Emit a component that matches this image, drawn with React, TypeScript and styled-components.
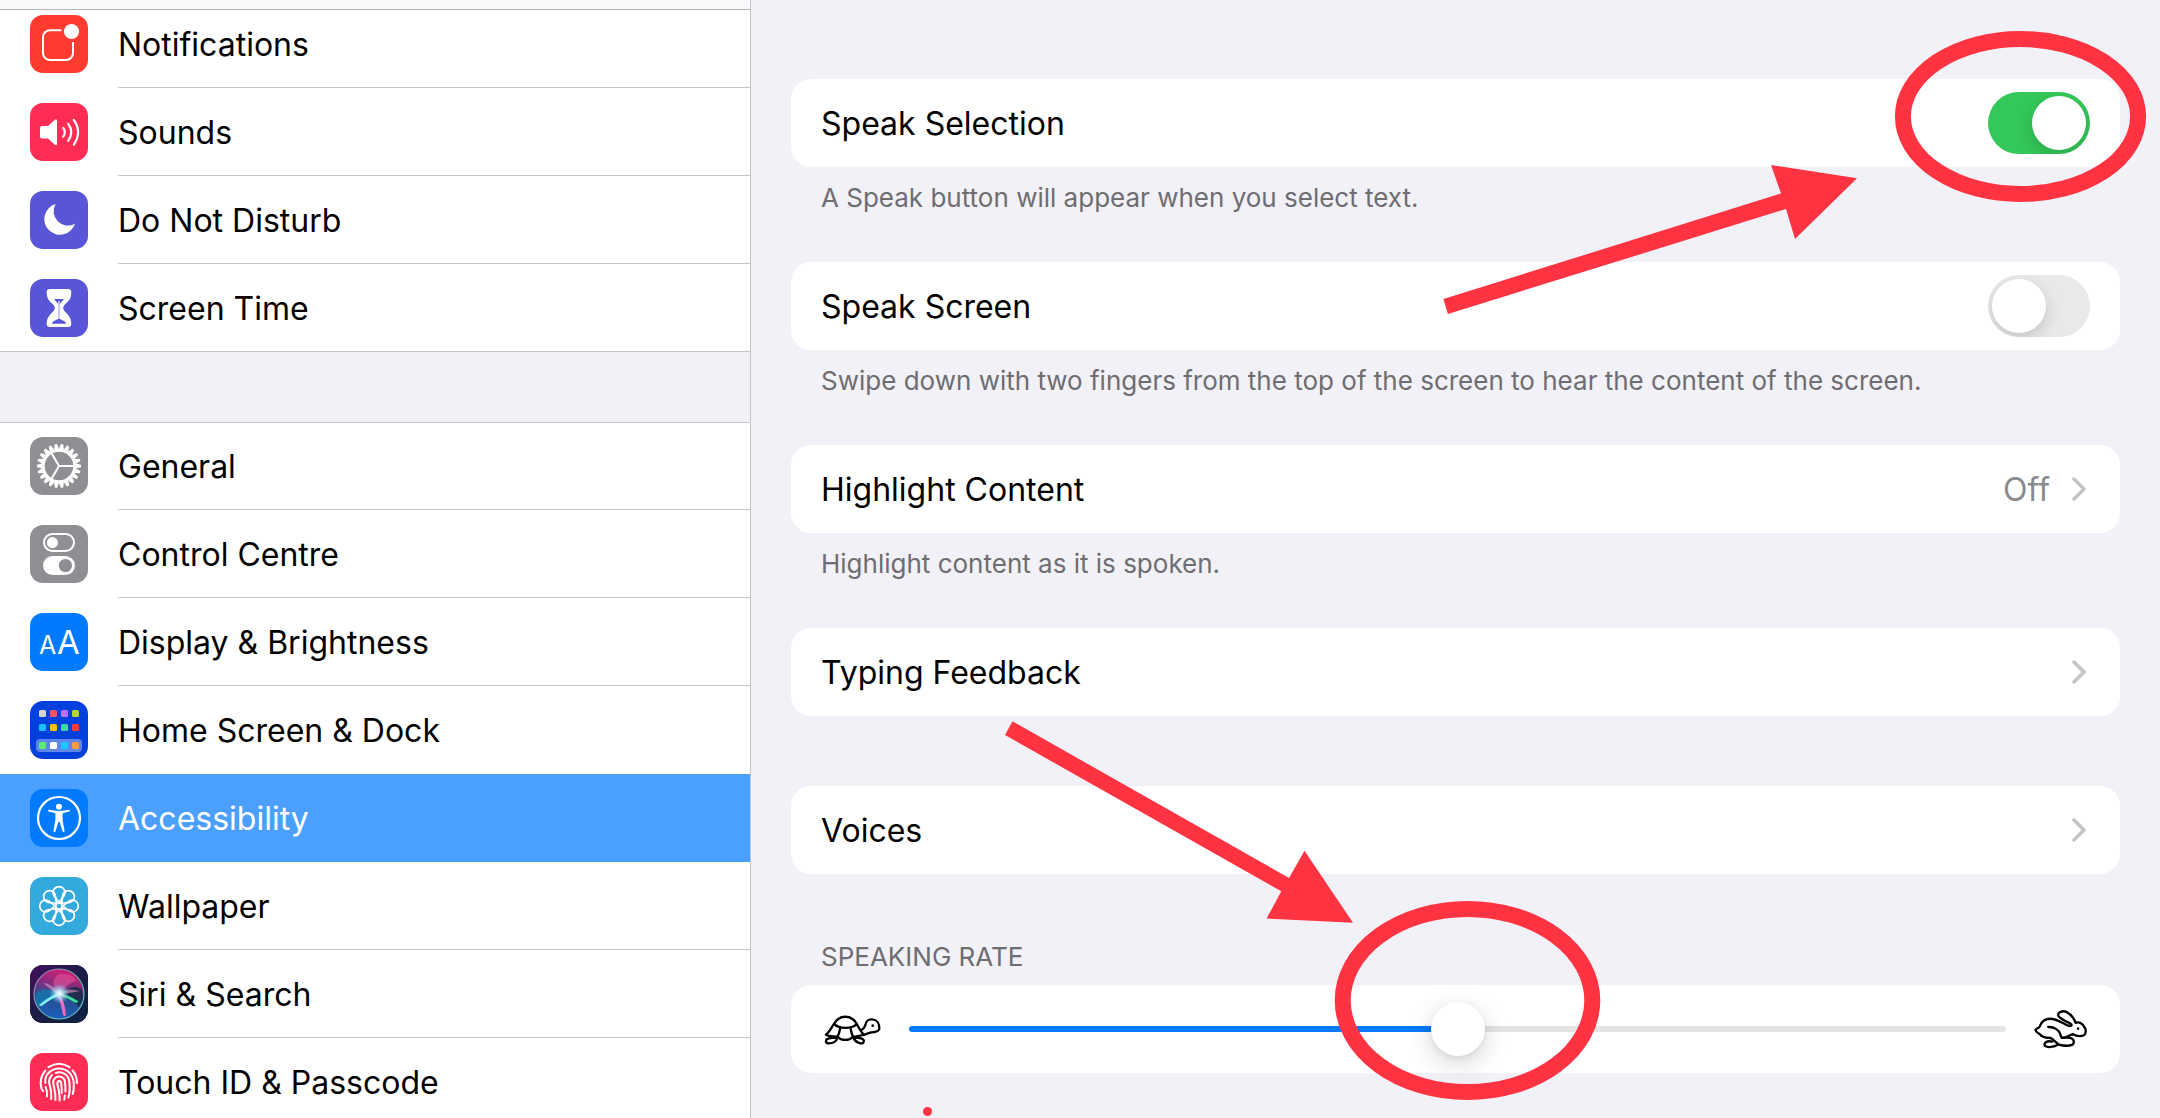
import React, { useState } from "react";
import styled, { createGlobalStyle } from "styled-components";

const GlobalStyle = createGlobalStyle`
  *, *::before, *::after { box-sizing: border-box; }
  body {
    margin: 0;
    background: #f2f1f7;
    color: #000;
    font-family: Inter, "Liberation Sans", sans-serif;
    font-size: 32px;
    line-height: 40px;
  }
  button, input { font: inherit; color: inherit; margin: 0; }
`;

const Screen = styled.div`
  display: grid;
  grid-template-columns: 751px minmax(0, 1fr);
  height: 100vh;
  overflow: hidden;
`;

/* ---------- Sidebar ---------- */

const Sidebar = styled.nav`
  display: flex;
  flex-direction: column;
  overflow: hidden;
  border-right: 1px solid #c6c6c8;
`;

const TopBar = styled.div`
  position: relative;
  z-index: 1;
  flex: none;
  height: 10px;
  margin-bottom: -10px;
  background: #f9f9fb;
  border-bottom: 1px solid #b4b4b8;
`;

const Group = styled.ul`
  flex: none;
  margin: 0 0 70px;
  padding: 0;
  list-style: none;
  background: #fff;
  box-shadow: 0 -1px 0 #c6c6c8 inset;

  & + & {
    box-shadow: 0 1px 0 #c6c6c8 inset;
  }
`;

const NavButton = styled.button<{ $selected: boolean }>`
  display: flex;
  align-items: center;
  gap: 30px;
  width: 100%;
  height: 88px;
  padding: 0 0 0 30px;
  border: 0;
  background: ${(p) => (p.$selected ? "#4ba0ff" : "transparent")};
  color: ${(p) => (p.$selected ? "#fff" : "#000")};
  text-align: left;
`;

const NavLabel = styled.span<{ $line: boolean }>`
  display: flex;
  align-items: center;
  flex: 1;
  height: 88px;
  padding-top: 2px;
  border-bottom: 1px solid ${(p) => (p.$line ? "#c6c6c8" : "transparent")};
`;

const Tile = styled.svg<{ $bg: string }>`
  flex: none;
  width: 58px;
  height: 58px;
  border-radius: 13px;
  background: ${(p) => p.$bg};
`;

/* ---------- Detail pane ---------- */

const Pane = styled.main`
  position: relative;
  display: flex;
  flex-direction: column;
  padding: 79px 40px 0;
  overflow: hidden;
`;

const Section = styled.section<{ $gap?: number }>`
  flex: none;
  margin-bottom: ${(p) => p.$gap ?? 0}px;
`;

const cardBox = `
  display: flex;
  align-items: center;
  width: 100%;
  height: 88px;
  padding: 0 30px;
  border: 0;
  border-radius: 20px;
  background: #fff;
  text-align: left;
`;

const CardLabel = styled.label`${cardBox}`;
const CardButton = styled.button`${cardBox}`;
const SliderCard = styled.div`
  ${cardBox}
  padding: 0 33px;
`;

const Title = styled.span`
  flex: 1;
  padding-top: 2px;
`;

const Value = styled.span`
  margin-right: 22px;
  padding-top: 2px;
  color: #8a8a8e;
`;

const Footnote = styled.p`
  margin: 0;
  padding: 15px 30px 48px;
  font-size: 26px;
  line-height: 32px;
  color: #6d6d72;
`;

const Heading = styled.h2`
  margin: 0;
  padding: 67px 30px 12px;
  font-size: 26px;
  font-weight: 400;
  line-height: 32px;
  color: #6d6d72;
`;

const Toggle = styled.input`
  appearance: none;
  flex: none;
  display: flex;
  width: 102px;
  height: 62px;
  padding: 4px;
  border-radius: 31px;
  background: #e9e9eb;
  overflow: hidden;

  &::before {
    content: "";
    width: 54px;
    height: 54px;
    border-radius: 50%;
    background: #fff;
    box-shadow: 0 6px 16px rgba(0, 0, 0, 0.16);
  }
  &:checked {
    justify-content: flex-end;
    background: #34c759;
  }
`;

const RateSlider = styled.input`
  appearance: none;
  flex: 1;
  min-width: 0;
  height: 54px;
  margin: 0 28px;
  background: transparent;

  &::-webkit-slider-runnable-track {
    height: 6px;
    border-radius: 3px;
    background: linear-gradient(to right, #007aff var(--fill), #e4e4e6 var(--fill));
  }
  &::-webkit-slider-thumb {
    appearance: none;
    width: 54px;
    height: 54px;
    margin-top: -24px;
    border-radius: 50%;
    background: #fff;
    box-shadow: 0 8px 26px rgba(0, 0, 0, 0.16), 0 2px 6px rgba(0, 0, 0, 0.08);
  }
`;

const Drawing = styled.svg`
  flex: none;
  display: block;
`;

const Marker = styled.svg`
  position: absolute;
  overflow: visible;
  pointer-events: none;
`;

/* ---------- Icons ---------- */

const White = (p: React.SVGProps<SVGGElement>) => (
  <g fill="none" stroke="#fff" strokeWidth={2.2} strokeLinecap="round" strokeLinejoin="round" {...p} />
);

const NotificationsIcon = () => (
  <>
    <White strokeWidth={2} strokeLinecap="butt">
      <path d="M31.5 15.2H20a7 7 0 0 0-7 7V38a7 7 0 0 0 7 7h16a7 7 0 0 0 7-7V27" />
    </White>
    <circle cx="41.5" cy="16.5" r="7.6" fill="#fff" />
  </>
);

const SoundsIcon = () => (
  <>
    <path
      fill="#fff"
      d="M12 23h6l6.500-6q2.500-1.800 2.500 1v22.400q0 2.800-2.500 1l-6.500-6h-6q-2 0-2-2v-8.400q0-2 2-2z"
    />
    <White>
      <path d="M33.200 25q3.200 4.200 0 8.600" />
      <path d="M38.200 20.800q6.200 8.200 0 17" />
      <path d="M43.800 17q8.600 12 0 24.600" />
    </White>
  </>
);

const MoonIcon = () => (
  <path fill="#fff" d="M25.600 13A15.700 15.700 0 1 0 45 32.700A14.300 14.300 0 0 1 25.600 13Z" />
);

const HourglassIcon = () => (
  <>
    <path
      fill="#fff"
      d="M20 10h18q3.300 0 3.300 3c0 8-3.500 9.500-7.300 13.500q-1.800 2.500 0 5C37.800 35.500 41.300 38 41.300 45q0 3-3.300 3H20q-3.300 0-3.300-3c0-7 3.500-9.500 7.300-13.500q1.800-2.500 0-5C20.200 22.500 16.700 21 16.700 13q0-3 3.300-3z"
    />
    <path
      fill="#5856d6"
      d="M24 20h10l-4.200 5v14.600q.3.900 2 1.400q4 1.200 4.200 3.800H22q.2-2.600 4.200-3.800q1.700-.5 2-1.400V25z"
    />
    <path stroke="#fff" strokeWidth="1.200" d="M29 22v18" />
  </>
);

const GearIcon = () => (
  <White strokeLinecap="butt">
    <circle cx="29" cy="29" r="15.800" strokeWidth="3" />
    {Array.from({ length: 22 }, (_, i) => (
      <path
        key={i}
        transform={`rotate(${(i * 360) / 22} 29 29)`}
        fill="#fff"
        stroke="none"
        d="M46 26.600L51 27.800V30.200L46 31.400Z"
      />
    ))}
    {[0, 120, 240].map((a) => (
      <path key={a} transform={`rotate(${a} 29 29)`} d="M29 29H45" strokeWidth="2" />
    ))}
  </White>
);

const ControlIcon = () => (
  <>
    <rect x="14" y="9" width="30" height="17" rx="8.500" fill="none" stroke="#fff" strokeWidth="2" />
    <circle cx="22.400" cy="17.600" r="5.600" fill="#fff" />
    <rect x="13" y="31" width="32" height="19" rx="9.500" fill="#fff" />
    <circle cx="35.400" cy="40.500" r="6.600" fill="#8e8e93" />
  </>
);

const DisplayIcon = () => (
  <g fill="#fff" fontFamily="Inter, sans-serif">
    <text x="9" y="41" fontSize="25">A</text>
    <text x="27" y="41" fontSize="33">A</text>
  </g>
);

const homeRows: [number, string[]][] = [
  [9, ["#d8d4cf", "#ff5060", "#b870ff", "#b5d334"]],
  [23, ["#18c0ff", "#ffc400", "#3cd9a4", "#ff3a30"]],
  [41, ["#57ef70", "#ffffff", "#18c8ff", "#ff9a40"]],
];

const HomeIcon = () => (
  <>
    <rect x="6" y="38" width="46" height="13" rx="4" fill="#5f86ea" />
    {homeRows.map(([y, colors]) =>
      colors.map((c, i) => <rect key={c + y} x={9 + i * 11} y={y} width="7" height="7" rx="1.500" fill={c} />)
    )}
  </>
);

const AccessibilityIcon = () => (
  <>
    <circle cx="29" cy="29" r="21" fill="none" stroke="#fff" strokeWidth="2.200" />
    <circle cx="29" cy="17.800" r="3" fill="#fff" />
    <path
      fill="#fff"
      d="M18.800 20.800Q29 23 39.200 20.800Q41 21.400 39.400 22.600L32.600 24.200V31L34.600 42Q34 43.800 32.600 42.400L29.600 33H28.400L25.400 42.400Q24 43.800 23.400 42L25.400 31V24.200L18.600 22.600Q17 21.400 18.800 20.800Z"
    />
  </>
);

const WallpaperIcon = () => (
  <White strokeWidth={1.700}>
    {Array.from({ length: 8 }, (_, i) => (
      <path
        key={i}
        transform={`rotate(${i * 45} 29 29)`}
        d="M29 25.800C27.500 22 23 19.500 23 15.700A6 6 0 0 1 35 15.700C35 19.500 30.500 22 29 25.800"
      />
    ))}
    <circle cx="29" cy="29" r="3.200" />
  </White>
);

const SiriIcon = () => (
  <>
    <defs>
      <linearGradient id="siriBg" x1="0" y1="0" x2="1" y2="1">
        <stop offset="0" stopColor="#43105c" />
        <stop offset="0.500" stopColor="#1b1c48" />
        <stop offset="1" stopColor="#0c2340" />
      </linearGradient>
      <linearGradient id="siriOrb" x1="0.600" y1="0" x2="0.400" y2="1">
        <stop offset="0" stopColor="#d31f74" />
        <stop offset="0.350" stopColor="#7c2f80" />
        <stop offset="0.600" stopColor="#24508f" />
        <stop offset="1" stopColor="#1c5fc0" />
      </linearGradient>
      <radialGradient id="siriGlow">
        <stop offset="0" stopColor="#fff" />
        <stop offset="0.350" stopColor="#bff4ff" stopOpacity="0.800" />
        <stop offset="1" stopColor="#7fd8ff" stopOpacity="0" />
      </radialGradient>
      <linearGradient id="siriRing" x1="0" y1="0" x2="1" y2="1">
        <stop offset="0" stopColor="#b070c0" />
        <stop offset="0.600" stopColor="#5cc0a0" />
        <stop offset="1" stopColor="#6ab0e0" />
      </linearGradient>
    </defs>
    <rect width="58" height="58" fill="url(#siriBg)" />
    <circle cx="29" cy="29" r="25" fill="url(#siriOrb)" stroke="url(#siriRing)" strokeWidth="1.200" />
    <path fill="#10283c" opacity="0.750" d="M32 27Q46 18 52 25Q55 34 49 42Q42 34 32 30Z" />
    <path fill="#0e7fb0" opacity="0.700" d="M28 28Q14 20 6 29Q5 36 8 41Q18 33 28 30Z" />
    <path fill="#f05aa0" opacity="0.500" d="M28 29Q18 18 29 9Q44 8 46 16Q38 18 30 28Z" />
    <path fill="#f4b0e0" opacity="0.500" d="M28 28Q22 18 13 18Q20 24 27 29ZM30 28Q36 22 50 26Q42 28 31 29Z" />
    <path fill="#7ff0f4" d="M30 27Q18 32 9 40Q10 42 13 40Q22 33 31 30Z" />
    <path fill="#3ce0a0" d="M30 28Q40 31 48 36Q48 39 44 37Q36 32 29 30Z" />
    <path fill="#f06ac0" d="M29 29Q35 36 36 50Q35 52 33 50Q31 38 27 30Z" />
    <circle cx="29.500" cy="28.500" r="10" fill="url(#siriGlow)" />
  </>
);

const TouchIcon = () => (
  <White strokeWidth={2}>
    <path d="M18.500 14.200Q29 7.500 39.500 14.200" />
    <path d="M42.500 17.500Q47 22.500 47 30" />
    <path d="M15.400 17.500Q9 25 11.200 34.500Q11.700 36.500 13 38" />
    <path d="M15.400 30C14 22 21 15.400 29 15.400S43.500 21.500 43.800 31Q44 37 42.800 41" />
    <path d="M15.600 34Q17.400 38 17 43.500" />
    <path d="M22 22Q18.600 25.500 19.200 30.500Q21.600 37 21.200 46" />
    <path d="M25.800 20C32 17.600 38.600 21.500 39.400 29Q40.400 38 38.400 44.500" />
    <path d="M25.400 47C26 38 23.200 33 23.200 29.500A5.900 5.900 0 0 1 35 29.500Q35.600 34.500 35.400 38.500" />
    <path d="M29.600 47.500C30 40 27.600 33.500 27.400 30.500Q27.400 28 29.200 28T31.200 30.500Q32 37 31.600 40" />
    <path d="M34.800 42.500L34.300 46.500" />
  </White>
);

const Turtle = () => (
  <Drawing viewBox="130 341 172 93" width="57" height="31" aria-hidden="true">
    <g fill="none" stroke="#000" strokeWidth="7" strokeLinejoin="round" strokeLinecap="round">
      <path d="M136 403C148 394 154 378 162 368C170 355 180 349 194 349C210 349 220 356 227 368C234 380 242 396 250 403C240 407 228 408 216 410C206 422 182 422 172 410C160 407 146 409 136 403Z" />
      <path d="M162 372C176 386 212 386 228 372M179 383C177 395 174 404 170 410M210 383C212 395 214 403 218 410" />
      <path d="M244 388C252 384 254 378 256 370C258 360 268 356 276 357C290 358 298 370 297 386C294 396 280 396 272 396C264 398 258 402 250 404" />
      <path d="M136 423C135 414 150 412 170 412C168 424 156 430 142 429C138 429 136 427 136 423ZM218 412C236 412 252 414 250 424C250 430 244 430 238 429C228 426 222 420 218 412Z" />
    </g>
    <circle cx="277" cy="376" r="4" />
  </Drawing>
);

const Rabbit = () => (
  <Drawing viewBox="223 209 160 120" width="53" height="40" aria-hidden="true">
    <g fill="none" stroke="#000" strokeWidth="7" strokeLinejoin="round" strokeLinecap="round">
      <path d="M228 272C230 266 238 267 240 262C246 244 258 238 272 238C296 238 312 256 330 260Q338 260 336 255C322 246 304 240 297 230C292 218 310 212 322 218C334 224 344 238 349 250" />
      <path d="M349 250C362 246 372 256 374 262C382 270 380 284 374 288C364 292 352 292 340 284C332 288 324 294 308 296" />
      <path d="M228 272C228 280 236 280 240 284C246 292 262 296 272 296C282 300 288 310 298 316C312 320 330 320 340 316C346 308 344 298 332 296C322 294 316 296 308 296" />
      <path d="M266 263C284 262 298 272 302 284C304 292 306 296 308 296" />
      <path d="M278 307C260 303 252 312 256 320C264 326 284 324 296 316" />
    </g>
    <circle cx="356" cy="268" r="4" />
  </Drawing>
);

const Chevron = () => (
  <Drawing viewBox="0 0 18 28" width="18" height="28" aria-hidden="true">
    <path d="M2 4L12 14L2 24" fill="none" stroke="#c4c4c7" strokeWidth="3.500" strokeLinecap="round" strokeLinejoin="round" />
  </Drawing>
);

/* ---------- Data ---------- */

type Item = { name: string; bg: string; icon: () => React.JSX.Element };

const groups: Item[][] = [
  [
    { name: "Notifications", bg: "#ff3b30", icon: NotificationsIcon },
    { name: "Sounds", bg: "#ff2d55", icon: SoundsIcon },
    { name: "Do Not Disturb", bg: "#5856d6", icon: MoonIcon },
    { name: "Screen Time", bg: "#5856d6", icon: HourglassIcon },
  ],
  [
    { name: "General", bg: "#8e8e93", icon: GearIcon },
    { name: "Control Centre", bg: "#8e8e93", icon: ControlIcon },
    { name: "Display & Brightness", bg: "#007aff", icon: DisplayIcon },
    { name: "Home Screen & Dock", bg: "#0040dd", icon: HomeIcon },
    { name: "Accessibility", bg: "#007aff", icon: AccessibilityIcon },
    { name: "Wallpaper", bg: "#34aadc", icon: WallpaperIcon },
    { name: "Siri & Search", bg: "#1b1c48", icon: SiriIcon },
    { name: "Touch ID & Passcode", bg: "#ff2d55", icon: TouchIcon },
  ],
];

const RED = "#ff3341";

const Annotations = () => (
  <>
    <Marker style={{ top: 31, right: 14 }} width="251" height="171" aria-hidden="true">
      <ellipse cx="125.500" cy="85.500" rx="117.600" ry="77.500" fill="none" stroke={RED} strokeWidth="16" />
    </Marker>
    <Marker style={{ top: 160, right: 302 }} width="415" height="156" aria-hidden="true">
      <path fill={RED} d="M0.400 139L338 33.500L328 5L414 18.300L352 79L343 49L4.900 154Z" />
    </Marker>
    <Marker style={{ top: 720, left: 254 }} width="350" height="204" aria-hidden="true">
      <path fill={RED} d="M7.500 1.300L284 158L299.500 130.800L348 202.800L261.500 198.600L276.300 171.300L0 15Z" />
    </Marker>
    <Marker style={{ top: 901, left: 584 }} width="265" height="199" aria-hidden="true">
      <ellipse cx="132.500" cy="99.500" rx="124.800" ry="91.600" fill="none" stroke={RED} strokeWidth="16" />
    </Marker>
    <Marker style={{ top: 1107, left: 172 }} width="9" height="9" aria-hidden="true">
      <circle cx="4.500" cy="4.500" r="4.500" fill={RED} />
    </Marker>
  </>
);

export default function App() {
  const [selected, setSelected] = useState("Accessibility");
  const [speakSelection, setSpeakSelection] = useState(true);
  const [speakScreen, setSpeakScreen] = useState(false);
  const [rate, setRate] = useState(50);

  return (
    <Screen>
      <GlobalStyle />
      <Sidebar aria-label="Settings">
        <TopBar />
        {groups.map((items, g) => (
          <Group key={g}>
            {items.map(({ name, bg, icon: Icon }, i) => {
              const last = i === items.length - 1;
              const beside = name === selected || items[i + 1]?.name === selected;
              return (
                <li key={name}>
                  <NavButton $selected={name === selected} onClick={() => setSelected(name)}>
                    <Tile $bg={bg} viewBox="0 0 58 58" aria-hidden="true">
                      <Icon />
                    </Tile>
                    <NavLabel $line={!last && !beside}>{name}</NavLabel>
                  </NavButton>
                </li>
              );
            })}
          </Group>
        ))}
      </Sidebar>

      <Pane>
        <Section>
          <CardLabel>
            <Title>Speak Selection</Title>
            <Toggle type="checkbox" role="switch" checked={speakSelection} onChange={(e) => setSpeakSelection(e.target.checked)} />
          </CardLabel>
          <Footnote>A Speak button will appear when you select text.</Footnote>
        </Section>
        <Section>
          <CardLabel>
            <Title>Speak Screen</Title>
            <Toggle type="checkbox" role="switch" checked={speakScreen} onChange={(e) => setSpeakScreen(e.target.checked)} />
          </CardLabel>
          <Footnote>Swipe down with two fingers from the top of the screen to hear the content of the screen.</Footnote>
        </Section>
        <Section>
          <CardButton>
            <Title>Highlight Content</Title>
            <Value>Off</Value>
            <Chevron />
          </CardButton>
          <Footnote>Highlight content as it is spoken.</Footnote>
        </Section>
        <Section $gap={70}>
          <CardButton>
            <Title>Typing Feedback</Title>
            <Chevron />
          </CardButton>
        </Section>
        <Section>
          <CardButton>
            <Title>Voices</Title>
            <Chevron />
          </CardButton>
        </Section>
        <Section>
          <Heading id="rate-heading">SPEAKING RATE</Heading>
          <SliderCard>
            <Turtle />
            <RateSlider
              type="range"
              aria-labelledby="rate-heading"
              min={0}
              max={100}
              value={rate}
              onChange={(e) => setRate(Number(e.target.value))}
              style={{ "--fill": `${rate}%` } as React.CSSProperties}
            />
            <Rabbit />
          </SliderCard>
        </Section>
        <Annotations />
      </Pane>
    </Screen>
  );
}
